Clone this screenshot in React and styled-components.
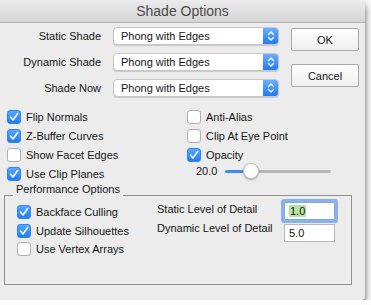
import React from 'react';
import styled, { createGlobalStyle } from 'styled-components';

const GlobalStyle = createGlobalStyle`
  html, body {
    margin: 0;
    background: #fbfbfb;
  }
`

const Window = styled.div`
  width: 365px;
  height: 300px;
  background: #ececec;
  border-radius: 0 5px 4px 0;
  box-shadow: 0 4px 7px rgba(0, 0, 0, .65);
  overflow: hidden;
  display: flex;
  flex-direction: column;
  font-family: "Liberation Sans", Arial, sans-serif;
  font-size: 11px;
  color: #161616;
`

const TitleBar = styled.div`
  height: 22px;
  flex: none;
  border-bottom: 1px solid #b3b3b3;
  background: linear-gradient(#ececec, #d5d5d5);
  display: flex;
  align-items: center;
  justify-content: center;
  font-size: 14px;
  color: #4a4a4a;
`

const Top = styled.div`
  display: flex;
  padding-top: 4px;
`

const ShadeGrid = styled.div`
  display: grid;
  grid-template-columns: 101px 166px;
  grid-auto-rows: 18px;
  column-gap: 12px;
  row-gap: 8px;
  align-items: center;
`

const FieldLabel = styled.div`
  text-align: right;
  white-space: nowrap;
`

const Select = styled.div`
  display: flex;
  height: 18px;
  box-sizing: border-box;
  border: 1px solid #c6c6c6;
  border-radius: 4px;
  background: #fff;
  box-shadow: 0 1px 1px rgba(0, 0, 0, .15);
  overflow: hidden;
`

const SelectText = styled.div`
  flex: 1;
  padding-left: 7px;
  line-height: 16px;
  white-space: nowrap;
`

const Stepper = styled.div`
  width: 16px;
  margin: -1px -1px -1px 0;
  background: linear-gradient(#6cb3ff, #1d78f6);
  display: flex;
  align-items: center;
  justify-content: center;
`

const ButtonColumn = styled.div`
  display: flex;
  flex-direction: column;
  gap: 13px;
  margin-left: 12px;
  padding-top: 1px;
`

const Button = styled.button`
  width: 68px;
  height: 23px;
  padding: 0;
  border: 1px solid #a9a9a9;
  border-radius: 2px;
  background: linear-gradient(#fefefe, #f0f0f0);
  font: inherit;
  color: inherit;
`

const Checks = styled.div`
  display: flex;
  margin-top: 10px;
  padding-left: 7px;
`

const CheckColumn = styled.div`
  display: flex;
  flex-direction: column;
  width: ${props => props.width}px;
  padding-top: ${props => props.top || 0}px;
`

const CheckRow = styled.div`
  display: flex;
  align-items: center;
  gap: 5px;
  height: ${props => props.height || 19}px;
  white-space: nowrap;
`

const Box = styled.span`
  width: 14px;
  height: 14px;
  box-sizing: border-box;
  border-radius: 3px;
  flex: none;
  display: flex;
  align-items: center;
  justify-content: center;
  border: 1px solid ${props => props.checked ? '#2f86f4' : '#b0b0b0'};
  background: ${props => props.checked ? 'linear-gradient(#58a8ff, #1f7cf5)' : '#fff'};
`

const SliderRow = styled.div`
  display: flex;
  align-items: center;
  height: 14px;
  padding-left: 9px;
  gap: 8px;
`

const Track = styled.div`
  position: relative;
  width: 106px;
  height: 3px;
  border-radius: 2px;
  background: linear-gradient(to right, #3d8cf6 0 26px, #b7b7b7 26px);
`

const Thumb = styled.span`
  position: absolute;
  left: 18px;
  top: -7px;
  width: 16px;
  height: 16px;
  box-sizing: border-box;
  border-radius: 50%;
  background: #fff;
  border: 1px solid #c2c2c2;
  box-shadow: 0 1px 2px rgba(0, 0, 0, .3);
`

const Group = styled.div`
  margin: 12px 0 0 4px;
  width: 348px;
  height: 90px;
  box-sizing: border-box;
  border: 1px solid #8f8f8f;
`

const Legend = styled.div`
  display: table;
  margin: -13px 0 0 8px;
  padding: 0 3px;
  line-height: 13px;
  background: #ececec;
`

const GroupBody = styled.div`
  display: flex;
  padding-left: 12px;
`

const DetailLabels = styled.div`
  width: 127px;
  padding-top: 7px;
  display: flex;
  flex-direction: column;
  gap: 6px;
  line-height: 13px;
  white-space: nowrap;
`

const DetailInputs = styled.div`
  padding-top: 6px;
  display: flex;
  flex-direction: column;
  gap: 4px;
`

const TextField = styled.div`
  width: 51px;
  height: 18px;
  box-sizing: border-box;
  padding-left: 4px;
  line-height: 16px;
  background: #fff;
  border: 1px solid ${props => props.focused ? '#8aa7cf' : '#b6b6b6'};
  box-shadow: ${props => props.focused ? '0 0 0 3px #85b3f1' : 'none'};
  border-radius: ${props => props.focused ? '1px' : '0'};
`

const Selected = styled.span`
  background: #b6e4a4;
  padding: 0 1px;
`

const Check = ({ checked }) => (
  <Box checked={checked}>
    {checked && (
      <svg width="10" height="10" viewBox="0 0 10 10">
        <path d="M1.6 5.2 L4 8 L8.6 1.6" fill="none" stroke="#fff" strokeWidth="1.6" strokeLinecap="round" strokeLinejoin="round" />
      </svg>
    )}
  </Box>
)

const CheckItem = ({ checked, label, height }) => (
  <CheckRow height={height}>
    <Check checked={checked} />
    <span>{label}</span>
  </CheckRow>
)

const ShadeSelect = ({ value }) => (
  <Select>
    <SelectText>{value}</SelectText>
    <Stepper>
      <svg width="10" height="14" viewBox="0 0 10 14">
        <path d="M2.5 5.5 L5 3 L7.5 5.5 M2.5 8.5 L5 11 L7.5 8.5" fill="none" stroke="#fff" strokeWidth="1.4" strokeLinecap="round" strokeLinejoin="round" />
      </svg>
    </Stepper>
  </Select>
)

const shades = ['Static Shade', 'Dynamic Shade', 'Shade Now'];

const App = () => (
  <Window>
    <GlobalStyle />
    <TitleBar>Shade Options</TitleBar>
    <Top>
      <ShadeGrid>
        {shades.map(name => (
          <React.Fragment key={name}>
            <FieldLabel>{name}</FieldLabel>
            <ShadeSelect value="Phong with Edges" />
          </React.Fragment>
        ))}
      </ShadeGrid>
      <ButtonColumn>
        <Button>OK</Button>
        <Button>Cancel</Button>
      </ButtonColumn>
    </Top>
    <Checks>
      <CheckColumn width={180}>
        <CheckItem checked label="Flip Normals" />
        <CheckItem checked label="Z-Buffer Curves" />
        <CheckItem label="Show Facet Edges" />
        <CheckItem checked label="Use Clip Planes" />
      </CheckColumn>
      <CheckColumn width={170}>
        <CheckItem label="Anti-Alias" />
        <CheckItem label="Clip At Eye Point" />
        <CheckItem checked label="Opacity" />
        <SliderRow>
          <span>20.0</span>
          <Track>
            <Thumb />
          </Track>
        </SliderRow>
      </CheckColumn>
    </Checks>
    <Group>
      <Legend>Performance Options</Legend>
      <GroupBody>
        <CheckColumn width={140} top={7}>
          <CheckItem checked height={18.5} label="Backface Culling" />
          <CheckItem checked height={18.5} label="Update Silhouettes" />
          <CheckItem height={18.5} label="Use Vertex Arrays" />
        </CheckColumn>
        <DetailLabels>
          <span>Static Level of Detail</span>
          <span>Dynamic Level of Detail</span>
        </DetailLabels>
        <DetailInputs>
          <TextField focused><Selected>1.0</Selected></TextField>
          <TextField>5.0</TextField>
        </DetailInputs>
      </GroupBody>
    </Group>
  </Window>
);

export default App;
